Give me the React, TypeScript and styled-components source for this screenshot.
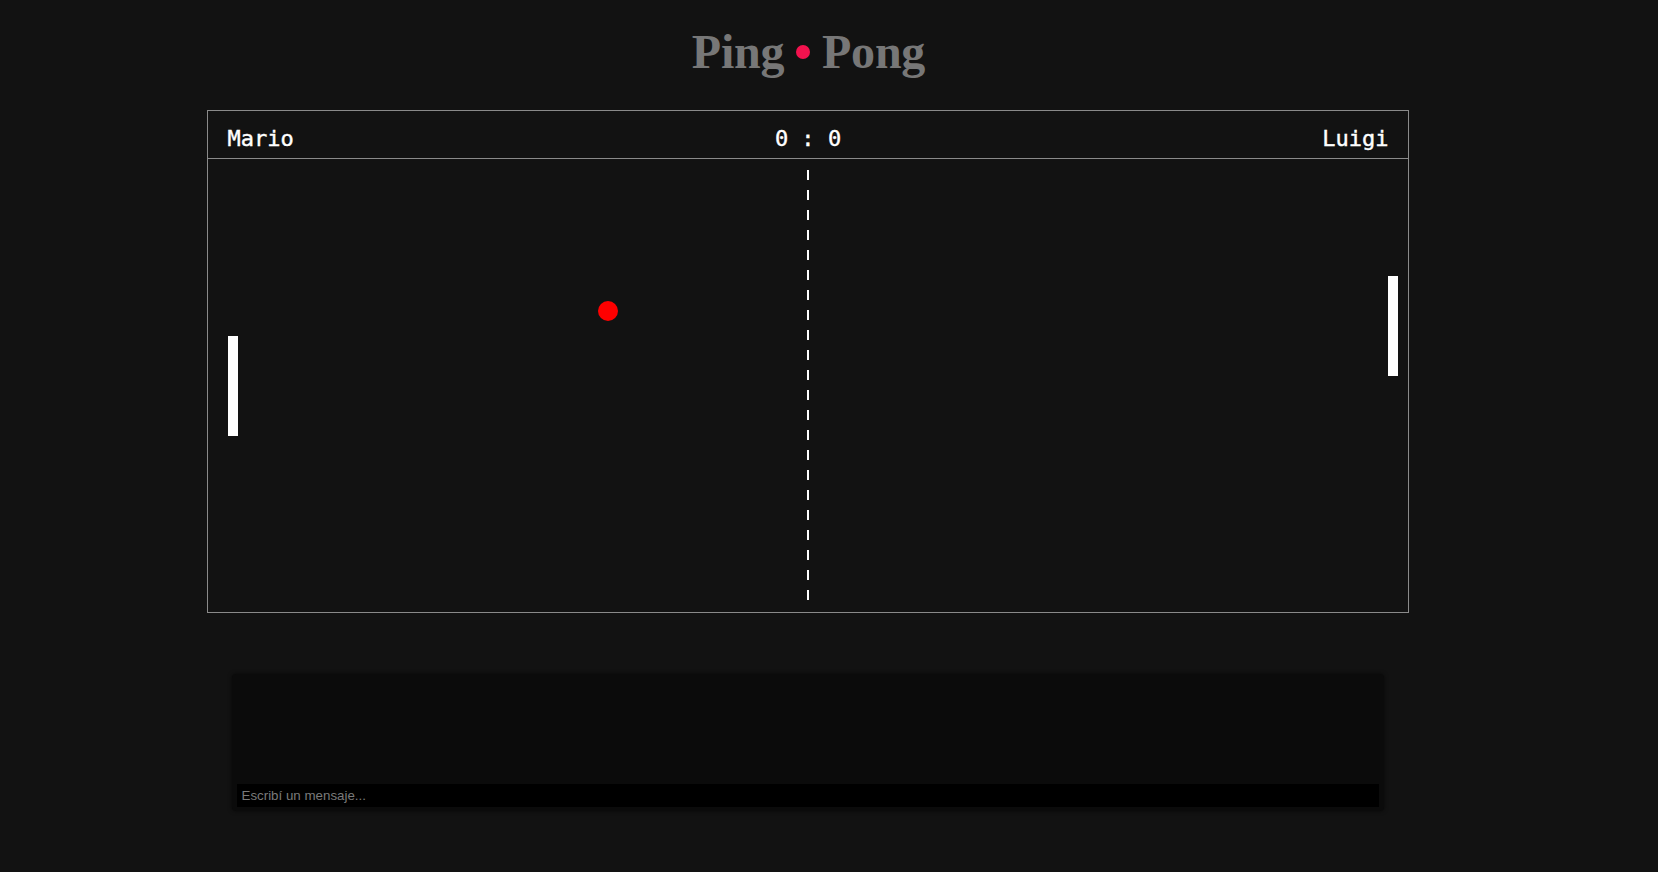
import React, { useState } from "react";
import styled, { createGlobalStyle } from "styled-components";

const GlobalStyle = createGlobalStyle`
    html, body {
        margin: 0;
        padding: 0;
        background-color: #121212;
    }
`

const Page = styled.div`
    width: 1615px;
    min-height: 872px;
    display: flex;
    flex-direction: column;
    align-items: center;
`

const Title = styled.h1`
    margin: 24px 0 31px 2px;
    font-family: "Liberation Serif", "Times New Roman", serif;
    font-size: 48px;
    font-weight: 700;
    color: #777777;
    white-space: pre;
    letter-spacing: -0.2px;
`

const Dot = styled.span`
    display: inline-block;
    width: 14px;
    height: 14px;
    margin: 0;
    border-radius: 50%;
    background-color: #f3124e;
    vertical-align: 9px;
`

const Board = styled.div`
    width: 1200px;
    border: 1px solid #8a8a8a;
    background-color: #121212;
`

const ScoreBar = styled.div`
    height: 40px;
    padding: 7px 19px 0 20px;
    border-bottom: 1px solid #8a8a8a;
    display: flex;
    align-items: center;
    justify-content: space-between;
    font-family: "DejaVu Sans Mono", "Liberation Mono", monospace;
    font-size: 22px;
    font-weight: 400;
    color: #ffffff;
    -webkit-text-stroke: 0.4px #ffffff;
`

const Name = styled.span<{ $align: "left" | "right" }>`
    width: 200px;
    text-align: ${p => p.$align};
`

const Score = styled.span`
    white-space: pre;
`

const Field = styled.div`
    position: relative;
    height: 453px;
    overflow: hidden;
`

const NetLine = styled.div`
    position: absolute;
    left: 599px;
    top: 11px;
    width: 2px;
    height: 431px;
    background: repeating-linear-gradient(
        to bottom,
        #ffffff 0,
        #ffffff 10px,
        transparent 10px,
        transparent 20px
    );
`

const Paddle = styled.div`
    position: absolute;
    width: 10px;
    height: 100px;
    background-color: #ffffff;
`

const Ball = styled.div`
    position: absolute;
    width: 20px;
    height: 20px;
    margin: -10px 0 0 -10px;
    border-radius: 50%;
    background-color: #ff0000;
`

const Chat = styled.div`
    width: 1142px;
    margin-top: 61px;
    padding: 0 5px 4px;
    background-color: #0b0b0b;
    border-radius: 4px;
    box-shadow: 0 0 4px rgba(0, 0, 0, 0.6);
    display: flex;
    flex-direction: column;
`

const Messages = styled.div`
    height: 110px;
`

const MessageInput = styled.input`
    height: 23px;
    box-sizing: border-box;
    padding: 0 5px;
    border: none;
    outline: none;
    background-color: #000000;
    color: #dddddd;
    font-family: "Liberation Sans", Arial, sans-serif;
    font-size: 13.333px;

    &::placeholder {
        color: #7a7a7a;
    }
`

const App = () => {
    const [message, setMessage] = useState("")

    const players = { left: "Mario", right: "Luigi" }
    const score = { left: 0, right: 0 }
    const leftPaddle = { x: 20, y: 177 }
    const rightPaddle = { x: 1180, y: 117 }
    const ball = { x: 400, y: 152 }

    return (
        <>
            <GlobalStyle />
            <Page>
                <Title>
                    Ping <Dot /> Pong
                </Title>
                <Board>
                    <ScoreBar>
                        <Name $align="left">{players.left}</Name>
                        <Score>{score.left} : {score.right}</Score>
                        <Name $align="right">{players.right}</Name>
                    </ScoreBar>
                    <Field>
                        <NetLine />
                        <Paddle style={{ left: leftPaddle.x, top: leftPaddle.y }} />
                        <Paddle style={{ left: rightPaddle.x, top: rightPaddle.y }} />
                        <Ball style={{ left: ball.x, top: ball.y }} />
                    </Field>
                </Board>
                <Chat>
                    <Messages />
                    <MessageInput
                        placeholder="Escribí un mensaje..."
                        value={message}
                        onChange={e => setMessage(e.target.value)}
                    />
                </Chat>
            </Page>
        </>
    )
}

export default App
